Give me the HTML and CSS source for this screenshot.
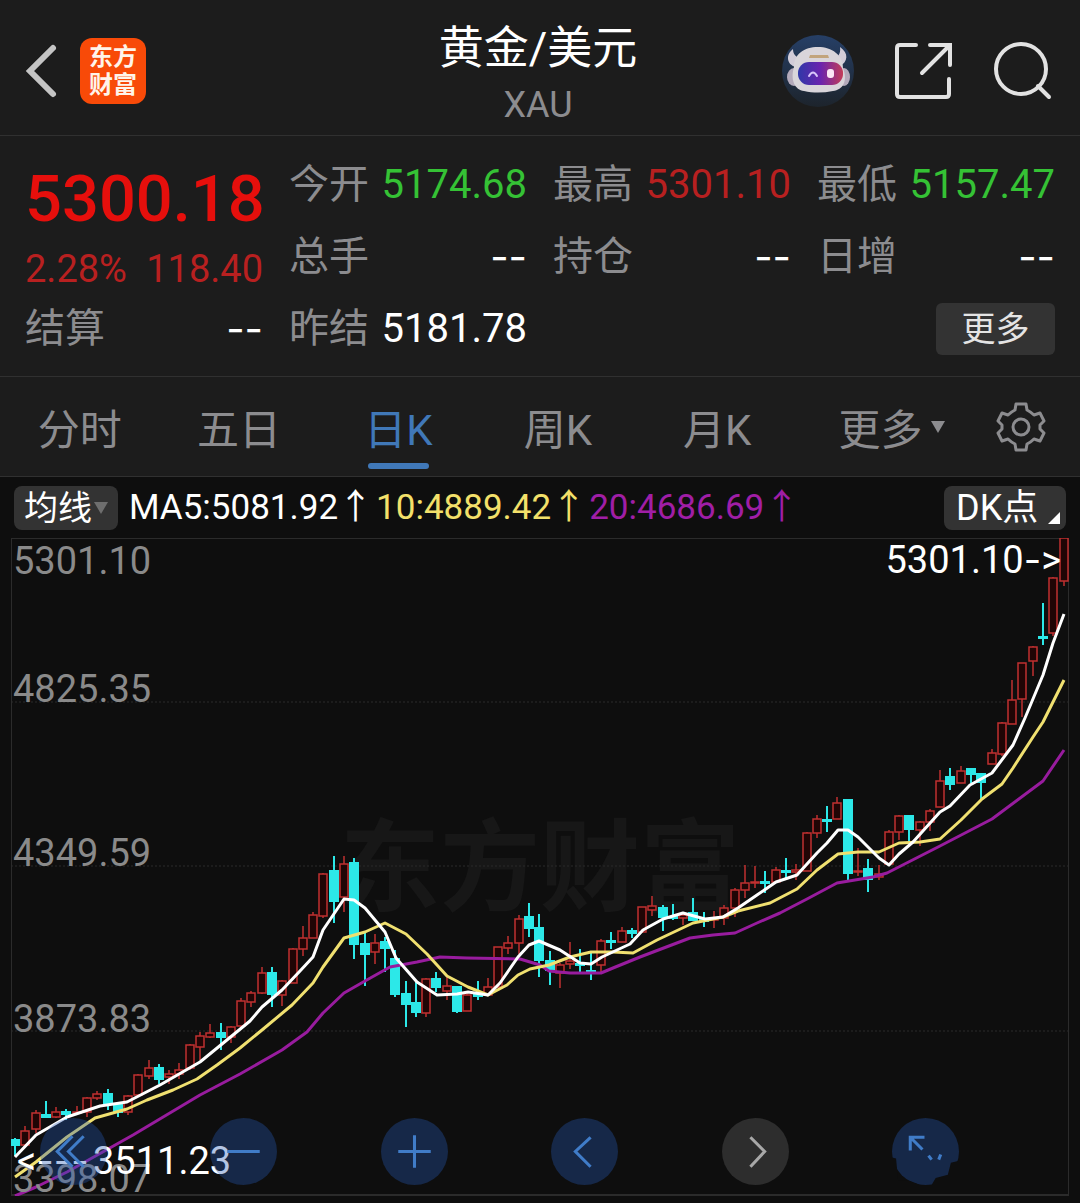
FILE: index.html
```html
<!DOCTYPE html>
<html lang="zh-CN">
<head>
    <meta charset="UTF-8">
    <meta name="viewport" content="width=device-width, initial-scale=1">
    <title>黄金/美元 XAU</title>
    <link rel="stylesheet" href="styles.css">
</head>
<body>
    <header class="header">
        <div class="header-left">
            <button class="icon-button" aria-label="返回">
                <svg width="34" height="56" viewBox="0 0 34 56"><path d="M29 5L6 28l23 23" fill="none" stroke="#c4c4c4" stroke-width="6" stroke-linecap="round"/></svg>
            </button>
            <a class="logo" href="#"><span>东方</span><span>财富</span></a>
        </div>
        <div class="header-title">
            <h1>黄金/美元</h1>
            <div class="code">XAU</div>
        </div>
        <div class="header-right">
            <button class="icon-button" aria-label="智能助手">
                <svg width="72" height="72" viewBox="0 0 72 72">
                    <defs>
                        <linearGradient id="sky" x1="0" y1="0" x2="0" y2="1"><stop offset="0" stop-color="#263f66"/><stop offset="1" stop-color="#1d242c"/></linearGradient>
                        <linearGradient id="visor"><stop offset="0" stop-color="#3038a8"/><stop offset=".5" stop-color="#6a24ae"/><stop offset="1" stop-color="#c23c58"/></linearGradient>
                    </defs>
                    <circle cx="36" cy="36" r="36" fill="url(#sky)"/>
                    <path d="M11 14c-8 6-6 16 3 18l8-9c-7 1-11-3-11-9zM58 12c9 6 8 15 0 19l-9-8c7 0 10-4 9-11z" fill="#d2ccd8"/>
                    <ellipse cx="12" cy="42" rx="7" ry="9" fill="#b4aabb"/>
                    <ellipse cx="62" cy="42" rx="6" ry="9" fill="#b4aabb"/>
                    <path d="M12 32c0-13 10-20 24-20s25 8 25 21c5 13 0 22-10 23-10 2-20 2-29 0-9-1-14-11-10-24z" fill="#d9d5da"/>
                    <path d="M28 20h18l1 3H27z" fill="#c2a47c"/>
                    <rect x="16" y="27" width="45" height="23" rx="11" fill="url(#visor)"/>
                    <path d="M27 41q4-7 8 0" fill="none" stroke="#d7c4fa" stroke-width="2" stroke-linecap="round"/>
                    <rect x="45" y="34" width="7" height="9" rx="3" fill="#fbe6f5"/>
                </svg>
            </button>
            <button class="icon-button" aria-label="分享">
                <svg width="58" height="58" viewBox="0 0 58 58"><path d="M20 3H4q-3 0-3 3v46q0 3 3 3h46q3 0 3-3V37M34 3h20v20M54 3L26 31" fill="none" stroke="#e2e2e2" stroke-width="4" stroke-linecap="round" transform="translate(1)"/></svg>
            </button>
            <button class="icon-button" aria-label="搜索">
                <svg width="58" height="58" viewBox="0 0 58 58"><circle cx="27" cy="27" r="25" fill="none" stroke="#e2e2e2" stroke-width="4"/><path d="M44 44l11 11" stroke="#e2e2e2" stroke-width="4" stroke-linecap="round"/></svg>
            </button>
        </div>
    </header>

    <section class="quote">
        <div class="price">
            <div class="price-now">5300.18</div>
            <div class="price-change"><span>2.28%</span><span>118.40</span></div>
        </div>
        <div class="item"><span>今开</span><b class="down">5174.68</b></div>
        <div class="item"><span>最高</span><b class="up">5301.10</b></div>
        <div class="item"><span>最低</span><b class="down">5157.47</b></div>
        <div class="item"><span>总手</span><b class="dash">--</b></div>
        <div class="item"><span>持仓</span><b class="dash">--</b></div>
        <div class="item"><span>日增</span><b class="dash">--</b></div>
        <div class="item"><span>结算</span><b class="dash">--</b></div>
        <div class="item"><span>昨结</span><b>5181.78</b></div>
        <button class="more">更多</button>
    </section>

    <nav class="tabs">
        <button class="tab">分时</button>
        <button class="tab">五日</button>
        <button class="tab active">日K</button>
        <button class="tab">周K</button>
        <button class="tab">月K</button>
        <button class="tab">更多<i class="caret"></i></button>
        <button class="icon-button" aria-label="设置">
            <svg width="52" height="52" viewBox="-26 -26 52 52" fill="none" stroke="#8c8c8f" stroke-width="3">
                <path d="M-5-23H5L6-17Q10-15 13-12L19-14 23-6 19-2V2L23 6 19 14 13 12Q10 15 6 17L5 23H-5L-6 17Q-10 15-13 12L-19 14-23 6-19 2V-2L-23-6-19-14-13-12Q-10-15-6-17Z" stroke-linejoin="round"/>
                <circle r="8"/>
            </svg>
        </button>
    </nav>

    <main class="kline">
        <div class="ma-bar">
            <button class="chip">均线<i class="caret"></i></button>
            <div class="ma-values">
                <span class="ma5">MA5:5081.92↑</span>
                <span class="ma10">10:4889.42↑</span>
                <span class="ma20">20:4686.69↑</span>
            </div>
            <button class="chip dk">DK点<i class="corner"></i></button>
        </div>

        <div class="chart">
            <svg id="chart" viewBox="11 538 1058 658" role="img" aria-label="日K线图">
                <text class="watermark" x="540" y="903" text-anchor="middle">东方财富</text>
                <path class="grid" d="M11 702H1069M11 866H1069M11 1031H1069"/>
                <rect class="frame" x="11" y="538" width="1058" height="657"/>
                <g id="candles"></g>
                <g id="lines"></g>
                <g class="axis">
                    <text x="13" y="574">5301.10</text>
                    <text x="13" y="702">4825.35</text>
                    <text x="13" y="866">4349.59</text>
                    <text x="13" y="1032">3873.83</text>
                    <text x="13" y="1192">3398.07</text>
                </g>
                <text class="mark" x="1061" y="573" text-anchor="end">5301.10<tspan class="dash">-</tspan>&gt;</text>
                <text class="mark" x="17" y="1174">&lt;<tspan class="dash">---</tspan></text>
                <text class="mark" x="93" y="1174">3511.23</text>
            </svg>

            <div class="tools">
                <button class="tool" aria-label="最早"><svg viewBox="0 0 66 66"><path d="M32 18L17 33l15 15M43 18L28 33l15 15"/></svg></button>
                <button class="tool" aria-label="缩小"><svg viewBox="0 0 66 66"><path d="M17 33h32"/></svg></button>
                <button class="tool" aria-label="放大"><svg viewBox="0 0 66 66"><path d="M17 33h32M33 17v32"/></svg></button>
                <button class="tool" aria-label="左移"><svg viewBox="0 0 66 66"><path d="M39 19L24 33l15 15"/></svg></button>
                <button class="tool off" aria-label="右移"><svg viewBox="0 0 66 66"><path d="M28 19l14 14-14 15"/></svg></button>
                <button class="tool" aria-label="全屏"><svg viewBox="0 0 66 66"><path d="M18 32V19h14M18 19l12 12M36 37l3 4M48 36l-2 5"/><path class="cut" d="M0 39l4 1 2 21 12 1 10 4 7 3H0zM66 42l-8 2-3 12-12 3-4 7h27z"/></svg></button>
            </div>
        </div>
    </main>

    <script src="chart.js"></script>
</body>
</html>
```
FILE: styles.css
```css
* {
    margin: 0;
    padding: 0;
    box-sizing: border-box;
}

body {
    font-family: Roboto, "Noto Sans CJK SC", sans-serif;
    background-color: #0e0e0e;
    color: #ffffff;
}

button {
    background: none;
    border: none;
    color: inherit;
    font-family: inherit;
    cursor: pointer;
}

svg {
    display: block;
}

/* 顶部 */
.header {
    display: grid;
    grid-template-columns: 1fr auto 1fr;
    align-items: center;
    height: 136px;
    padding: 6px 28px 0 24px;
    background-color: #1c1c1c;
    border-bottom: 1px solid #303030;
}

.header-left {
    display: flex;
    align-items: center;
    gap: 22px;
}

.logo {
    display: flex;
    flex-direction: column;
    align-items: center;
    justify-content: center;
    width: 66px;
    height: 66px;
    border-radius: 12px;
    background-color: #f84a08;
    color: #fff4ea;
    font-size: 24px;
    font-weight: 700;
    line-height: 28px;
    text-decoration: none;
}

.header-title {
    padding-top: 8px;
    text-align: center;
}

h1 {
    font-size: 45px;
    font-weight: 400;
    line-height: 60px;
}

.code {
    font-size: 36px;
    line-height: 52px;
    color: #8c8c8f;
}

.header-right {
    display: flex;
    align-items: center;
    justify-content: flex-end;
    gap: 41px;
}

/* 报价 */
.quote {
    display: grid;
    grid-template-columns: repeat(4, minmax(0, 1fr));
    grid-auto-rows: 72px;
    column-gap: 26px;
    align-items: center;
    padding: 13px 25px 11px;
    background-color: #1c1c1c;
    border-bottom: 1px solid #303030;
}

.price {
    grid-row: span 2;
    padding-top: 16px;
    white-space: nowrap;
}

.price-now {
    font-size: 65px;
    font-weight: 500;
    line-height: 80px;
    color: #e60f0c;
}

.price-change {
    display: flex;
    justify-content: space-between;
    font-size: 38px;
    line-height: 60px;
    color: #b82020;
}

.item {
    display: flex;
    align-items: center;
    justify-content: space-between;
    font-size: 40px;
    line-height: 72px;
    white-space: nowrap;
}

.item span {
    color: #8c8c8f;
}

.item b {
    font-weight: 400;
}

.item .up {
    color: #b82020;
}

.item .down {
    color: #35c235;
}

.dash {
    font-family: Inter, sans-serif;
}

.more {
    grid-column: 4;
    justify-self: end;
    width: 119px;
    height: 52px;
    border-radius: 6px;
    background-color: #333333;
    color: #e4e4e4;
    font-size: 34px;
    line-height: 50px;
}

/* 周期 */
.tabs {
    display: grid;
    grid-template-columns: repeat(5, 16fr) 19fr 7fr;
    align-items: center;
    justify-items: center;
    height: 100px;
    padding-right: 24px;
    background-color: #1c1c1c;
    border-bottom: 1px solid #303030;
}

.tab {
    position: relative;
    display: flex;
    align-items: center;
    height: 99px;
    font-size: 42px;
    color: #8c8c8f;
    white-space: nowrap;
}

.tab.active {
    color: #4078b8;
}

.tab.active::after {
    content: "";
    position: absolute;
    left: 4px;
    right: 4px;
    bottom: 7px;
    height: 6px;
    border-radius: 3px;
    background-color: #4078b8;
}

.caret {
    border: 7px solid transparent;
    border-top: 12px solid currentColor;
    border-bottom: none;
}

.tab .caret {
    margin-left: 8px;
}

/* 均线 */
.ma-bar {
    display: flex;
    align-items: center;
    height: 61px;
    padding: 0 14px;
}

.chip {
    display: flex;
    align-items: center;
    justify-content: center;
    width: 104px;
    height: 44px;
    border-radius: 8px;
    background-color: #333333;
    font-size: 34px;
    line-height: 44px;
    white-space: nowrap;
}

.chip .caret {
    margin-left: 2px;
    color: #6e6e6e;
}

.chip.dk {
    position: relative;
    width: 122px;
    justify-content: flex-start;
    padding-left: 12px;
    margin-left: auto;
    font-size: 36px;
}

.corner {
    position: absolute;
    right: 6px;
    bottom: 6px;
    border-left: 12px solid transparent;
    border-bottom: 12px solid #ffffff;
}

.ma-values {
    display: flex;
    gap: 3px;
    padding-left: 11px;
    font-size: 35px;
    line-height: 44px;
    white-space: nowrap;
}

.ma10 {
    color: #f3e06a;
}

.ma20 {
    color: #a01ea6;
}

/* K线图 */
.chart {
    position: relative;
    padding: 0 11px 7px;
}

#chart {
    width: 100%;
}

.watermark {
    font-size: 100px;
    font-weight: 700;
    fill: #171717;
}

.grid {
    stroke: #2b2b2b;
    stroke-dasharray: 2 2;
}

.frame {
    fill: none;
    stroke: #2b2b2b;
    stroke-width: 2;
}

.axis {
    font-size: 38px;
    fill: #8a8a8a;
}

.mark {
    font-size: 38px;
    fill: #ffffff;
}

.candle-up {
    fill: #200505;
    stroke: #c03030;
    stroke-width: 1.5;
}

.candle-down {
    fill: #2ce8e8;
    stroke: #2ce8e8;
    stroke-width: 2;
}

.line {
    fill: none;
    stroke-width: 3;
    stroke-linejoin: round;
}

.line-ma5 {
    stroke: #ffffff;
}

.line-ma10 {
    stroke: #f0e070;
}

.line-ma20 {
    stroke: #981c9e;
}

/* 图上按钮 */
.tools {
    position: absolute;
    left: 3.7%;
    right: 11.2%;
    bottom: 18px;
    display: flex;
    justify-content: space-between;
}

.tool {
    width: 67px;
    height: 67px;
    border-radius: 50%;
    background-color: rgba(37, 90, 180, 0.35);
    color: #407cc8;
}

.tool svg {
    fill: none;
    stroke: currentColor;
    stroke-width: 3;
}

.tool.off {
    background-color: #2d2d2d;
    color: #a8a8a8;
}

.tool .cut {
    fill: #0e0e0e;
    stroke: none;
}
```
FILE: chart.js
```js
// [影线上, 实体上, 实体下, 影线下, 1 涨 / 0 跌]
const candles = [
    [1138, 1140, 1145, 1156, 0], [1126, 1131, 1145, 1146, 1], [1110, 1113, 1129, 1133, 1], [1101, 1115, 1117, 1117, 0],
    [1107, 1112, 1117, 1118, 1], [1109, 1112, 1114, 1120, 0], [1106, 1112, 1113, 1115, 1], [1097, 1098, 1112, 1117, 1],
    [1091, 1094, 1098, 1100, 1], [1089, 1094, 1104, 1110, 0], [1102, 1104, 1112, 1117, 0], [1095, 1096, 1112, 1115, 1],
    [1074, 1075, 1095, 1095, 1], [1060, 1068, 1076, 1079, 1], [1064, 1068, 1079, 1084, 0], [1070, 1074, 1077, 1084, 1],
    [1063, 1070, 1074, 1079, 1], [1044, 1045, 1068, 1070, 1], [1032, 1036, 1047, 1060, 1], [1024, 1033, 1037, 1038, 1],
    [1023, 1033, 1037, 1050, 0], [1026, 1027, 1037, 1043, 1], [998, 1001, 1026, 1027, 1], [991, 993, 1002, 1007, 1],
    [967, 973, 993, 994, 1], [967, 973, 994, 1007, 0], [980, 981, 995, 1006, 1], [948, 949, 983, 983, 1],
    [926, 938, 949, 956, 1], [912, 915, 938, 938, 1], [873, 874, 916, 918, 1], [856, 871, 901, 923, 0],
    [856, 864, 897, 912, 1], [858, 863, 944, 959, 0], [933, 944, 954, 986, 0], [934, 943, 952, 964, 1],
    [937, 942, 948, 972, 0], [950, 959, 994, 997, 0], [981, 994, 1004, 1027, 0], [981, 1003, 1012, 1017, 0],
    [978, 979, 1013, 1017, 1], [972, 979, 987, 992, 0], [975, 986, 991, 1000, 1], [986, 987, 1011, 1013, 0],
    [993, 995, 1011, 1011, 1], [981, 993, 996, 1000, 0], [978, 987, 995, 995, 1], [947, 947, 987, 988, 1],
    [936, 943, 948, 954, 1], [915, 919, 943, 954, 1], [903, 917, 928, 937, 0], [914, 928, 960, 977, 0],
    [951, 961, 970, 985, 0], [963, 965, 973, 988, 1], [942, 961, 964, 969, 1], [949, 964, 965, 972, 0],
    [953, 971, 972, 980, 0], [939, 941, 965, 973, 1], [932, 941, 942, 949, 0], [927, 931, 942, 942, 1],
    [928, 931, 933, 938, 0], [907, 907, 932, 932, 1], [896, 906, 910, 916, 1], [905, 908, 917, 931, 0],
    [904, 917, 918, 920, 0], [913, 915, 918, 925, 1], [898, 913, 920, 921, 0], [912, 920, 921, 927, 0],
    [911, 918, 920, 928, 1], [905, 908, 918, 925, 1], [888, 890, 908, 917, 1], [865, 883, 890, 898, 1],
    [866, 882, 883, 888, 1], [871, 882, 883, 893, 0], [867, 870, 882, 883, 1], [858, 871, 872, 878, 0],
    [864, 870, 872, 880, 1], [832, 833, 871, 871, 1], [815, 819, 833, 838, 1], [806, 820, 821, 832, 0],
    [797, 803, 819, 819, 1], [799, 800, 873, 882, 0], [848, 871, 872, 876, 1], [859, 869, 879, 892, 0],
    [865, 874, 877, 880, 1], [830, 832, 864, 864, 1], [815, 816, 832, 840, 1], [815, 816, 829, 842, 0],
    [821, 822, 830, 846, 1], [809, 811, 822, 831, 1], [770, 781, 807, 807, 1], [768, 777, 784, 790, 0],
    [766, 771, 783, 783, 1], [769, 769, 774, 783, 0], [773, 774, 782, 799, 0], [749, 753, 764, 764, 1],
    [722, 723, 754, 756, 1], [680, 700, 724, 724, 1], [663, 663, 699, 717, 1], [646, 647, 661, 676, 1],
    [603, 637, 638, 645, 0], [577, 578, 633, 636, 1], [538, 538, 581, 586, 1]
];

const lines = {
    ma20: '15,1196 36,1187 67,1172 133,1135 200,1095 240,1074 282,1050 307,1032 323,1013 344,993 365,981 390,967 417,962 440,957 467,958 520,959 540,965 549,971 570,973 601,973 613,968 640,957 690,938 713,935 735,933 757,923 780,913 807,899 837,883 873,877 887,873 940,846 992,819 1043,781 1064,750',
    ma10: '15,1177 36,1162 67,1137 95,1118 127,1109 147,1100 173,1090 197,1079 217,1065 240,1048 262,1030 292,1005 313,983 323,967 344,938 365,932 385,923 406,934 427,954 447,976 468,987 488,995 507,985 518,975 530,969 549,965 570,957 591,952 613,952 633,953 657,940 693,923 723,917 738,911 770,903 797,889 817,870 838,854 858,852 879,852 899,843 920,842 940,839 961,820 982,799 1002,784 1013,768 1033,737 1043,722 1064,680',
    ma5: '15,1157 36,1135 67,1117 100,1106 127,1102 160,1085 200,1062 233,1035 250,1021 262,1007 282,990 300,971 313,957 323,930 344,899 354,900 365,908 385,932 396,958 417,982 437,995 457,994 468,992 488,995 500,983 518,957 529,945 539,941 560,950 580,963 591,964 602,957 630,944 643,930 663,919 683,913 705,919 723,917 738,908 757,895 776,882 797,875 817,853 827,843 838,830 848,830 858,837 879,858 889,865 899,854 913,842 940,812 950,806 970,785 992,773 1013,745 1025,718 1043,675 1053,643 1064,614'
};

const first = 15;
const step = 10.28;

document.getElementById('candles').innerHTML = candles.map(([high, top, bottom, low, up], i) => {
    const x = Math.round(first + i * step);
    return `<path class="${up ? 'candle-up' : 'candle-down'}" d="M${x} ${high}V${top}M${x} ${bottom}V${low}M${x - 4} ${top}h8V${bottom}h-8z"/>`;
}).join('');

document.getElementById('lines').innerHTML = Object.keys(lines).map(name =>
    `<polyline class="line line-${name}" points="${lines[name]}"/>`
).join('');
```
